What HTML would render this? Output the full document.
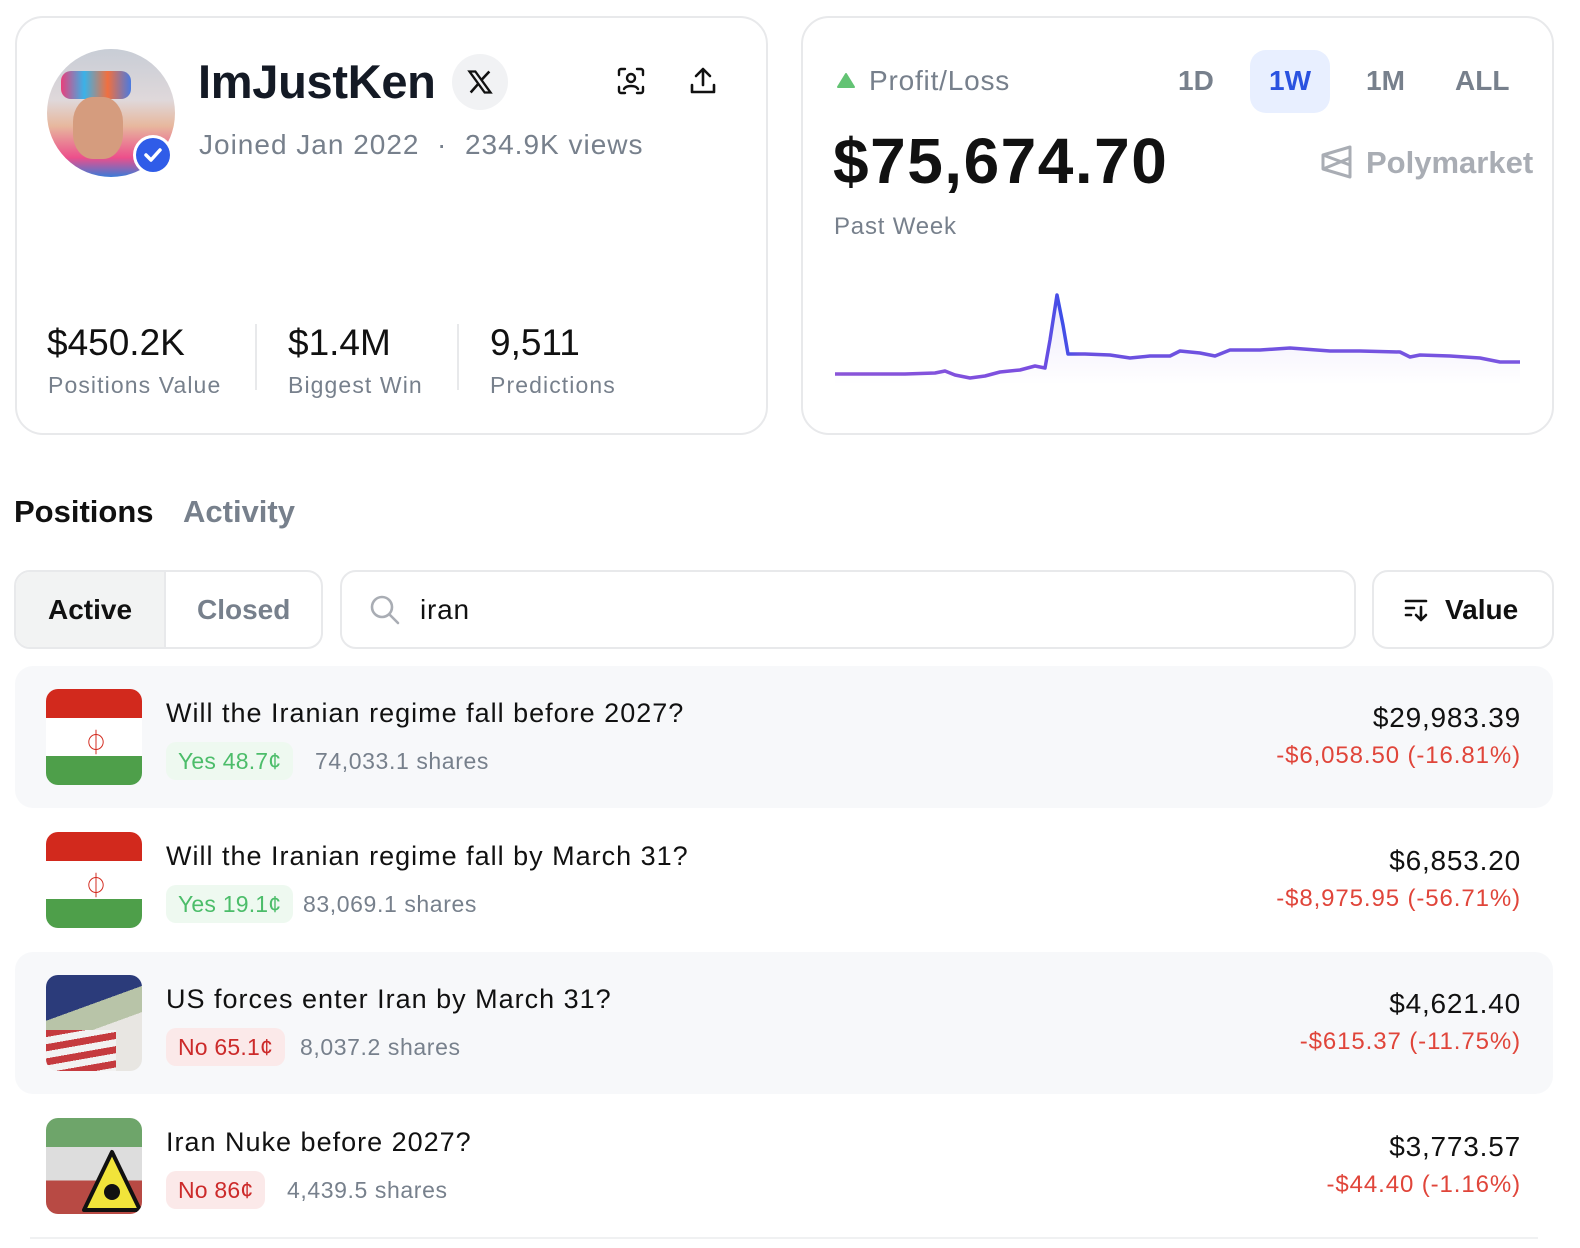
<!DOCTYPE html>
<html><head><meta charset="utf-8"><style>
*{margin:0;padding:0;box-sizing:border-box}
body{width:1580px;height:1248px;background:#fff;font-family:"Liberation Sans",sans-serif;color:#111;position:relative;overflow:hidden}
.a{position:absolute;white-space:nowrap}
.card{position:absolute;border:2px solid #e8e9eb;border-radius:28px;background:#fff}
.g{color:#77808c}
.row{position:absolute;left:15px;width:1538px;height:142px;border-radius:18px}
.flag{position:absolute;left:31px;top:23px;width:96px;height:96px;border-radius:12px;overflow:hidden}
.t{position:absolute;left:151px;top:32px;font-size:27px;color:#111;letter-spacing:1px}
.pill{position:absolute;left:151px;top:76px;height:38px;border-radius:10px;font-size:23px;line-height:38px;padding:0 12px;letter-spacing:0.2px}
.yes{background:#eef9f0;color:#4cbd6a}
.no{background:#fbe9e9;color:#cc2a2a}
.sh{position:absolute;top:82px;font-size:23px;color:#77808c;letter-spacing:0.6px}
.v{position:absolute;right:32px;top:36px;font-size:28px;color:#111;letter-spacing:0.8px}
.p{position:absolute;right:32px;top:76px;font-size:24px;color:#e0453a;letter-spacing:0.9px}
</style></head><body>

<div class="card" style="left:15px;top:16px;width:753px;height:419px"></div>
<div class="card" style="left:801px;top:16px;width:753px;height:419px"></div>

<div class="a" style="left:47px;top:49px;width:128px;height:128px;border-radius:50%;overflow:hidden;background:linear-gradient(180deg,#c8cdd6 0%,#dfd8da 40%,#e7b89e 60%,#ec4f8b 85%,#3a7bd8 100%)">
 <div style="position:absolute;left:14px;top:22px;width:70px;height:28px;border-radius:10px;background:linear-gradient(90deg,#e93f7b,#3ab2e8,#f07040,#4a7ae0)"></div>
 <div style="position:absolute;left:26px;top:48px;width:50px;height:62px;border-radius:40%;background:#d59c7e"></div>
</div>
<div class="a" style="left:133px;top:135px;width:40px;height:40px;border-radius:50%;background:#fff"></div>
<div class="a" style="left:136px;top:138px;width:34px;height:34px;border-radius:50%;background:#2f5ce8"></div>
<svg class="a" style="left:136px;top:138px" width="34" height="34"><path d="M10 17l5 5 9-10" stroke="#fff" stroke-width="3.5" fill="none" stroke-linecap="round" stroke-linejoin="round"/></svg>

<div class="a" style="left:198px;top:54px;font-size:47px;font-weight:bold;color:#141a25;letter-spacing:-0.3px">ImJustKen</div>
<div class="a" style="left:452px;top:54px;width:56px;height:56px;border-radius:50%;background:#f1f2f4"></div>
<svg class="a" style="left:466px;top:68px" width="28" height="28" viewBox="0 0 24 24"><path d="M3 3h5l13 18h-5z" fill="none" stroke="#111" stroke-width="2"/><path d="M4 21L11 13M13 10.5L20 3" stroke="#111" stroke-width="2.2"/></svg>
<svg class="a" style="left:616px;top:66px" width="30" height="30" viewBox="0 0 30 30" fill="none" stroke="#111" stroke-width="2.4" stroke-linecap="round"><path d="M3 9V5a2 2 0 0 1 2-2h4M21 3h4a2 2 0 0 1 2 2v4M27 21v4a2 2 0 0 1-2 2h-4M9 27H5a2 2 0 0 1-2-2v-4"/><circle cx="15" cy="12" r="4"/><path d="M8 23c2-4 12-4 14 0"/></svg>
<svg class="a" style="left:689px;top:66px" width="28" height="30" viewBox="0 0 28 30" fill="none" stroke="#111" stroke-width="2.6" stroke-linecap="round" stroke-linejoin="round"><path d="M14 19V3M7 10l7-7 7 7M3 19v7h22v-7"/></svg>

<div class="a g" style="left:199px;top:129px;font-size:28px;letter-spacing:1px">Joined Jan 2022 &nbsp;·&nbsp; 234.9K views</div>

<div class="a" style="left:47px;top:322px;font-size:37px;color:#111">$450.2K</div>
<div class="a g" style="left:48px;top:372px;font-size:23px;letter-spacing:1.1px">Positions Value</div>
<div class="a" style="left:255px;top:324px;width:2px;height:66px;background:#e8e9eb"></div>
<div class="a" style="left:288px;top:322px;font-size:37px;color:#111">$1.4M</div>
<div class="a g" style="left:288px;top:372px;font-size:23px;letter-spacing:1.1px">Biggest Win</div>
<div class="a" style="left:457px;top:324px;width:2px;height:66px;background:#e8e9eb"></div>
<div class="a" style="left:490px;top:322px;font-size:37px;color:#111">9,511</div>
<div class="a g" style="left:490px;top:372px;font-size:23px;letter-spacing:1.1px">Predictions</div>

<svg class="a" style="left:836px;top:72px" width="20" height="17"><path d="M10 2L18 15H2z" fill="#63c374" stroke="#63c374" stroke-width="2" stroke-linejoin="round"/></svg>
<div class="a g" style="left:869px;top:65px;font-size:28px;letter-spacing:0.8px">Profit/Loss</div>
<div class="a g" style="left:1178px;top:65px;font-size:28px;font-weight:bold">1D</div>
<div class="a" style="left:1250px;top:50px;width:80px;height:63px;border-radius:16px;background:#e8efff"></div>
<div class="a" style="left:1269px;top:65px;font-size:28px;font-weight:bold;color:#2a52e0">1W</div>
<div class="a g" style="left:1366px;top:65px;font-size:28px;font-weight:bold">1M</div>
<div class="a g" style="left:1455px;top:65px;font-size:28px;font-weight:bold">ALL</div>
<div class="a" style="left:833px;top:124px;font-size:64px;font-weight:bold;color:#111;letter-spacing:1.5px">$75,674.70</div>
<svg class="a" style="left:1321px;top:144px" width="32" height="36" viewBox="0 0 32 36" fill="none" stroke="#a9adb4" stroke-width="3" stroke-linejoin="round"><path d="M29 3L2 11v14l27 8zM2 11l27 10M2 25l27-11"/></svg>
<div class="a" style="left:1366px;top:145px;font-size:31px;font-weight:bold;color:#a9adb4">Polymarket</div>
<div class="a g" style="left:834px;top:213px;font-size:24px;letter-spacing:0.8px">Past Week</div>

<svg class="a" style="left:0;top:0" width="1580" height="440">
<defs>
<linearGradient id="lg" x1="0" y1="0" x2="1" y2="0"><stop offset="0" stop-color="#8a55d8"/><stop offset=".3" stop-color="#7a4ee0"/><stop offset=".33" stop-color="#3c4ee8"/><stop offset=".36" stop-color="#6a50e0"/><stop offset="1" stop-color="#7a55e0"/></linearGradient>
<linearGradient id="fg" x1="0" y1="0" x2="0" y2="1"><stop offset="0" stop-color="#7a55e0" stop-opacity=".14"/><stop offset="1" stop-color="#7a55e0" stop-opacity="0"/></linearGradient>
</defs>
<path d="M835 374L865 374L905 374L935 373L945 371L955 375L970 378L985 376L1000 372L1020 370L1035 366L1045 368L1050 340L1057 295L1063 325L1068 354L1085 354L1110 355L1130 358L1150 356L1170 356L1180 351L1200 353L1215 356L1230 350L1260 350L1290 348L1330 351L1360 351L1400 352L1410 357L1420 355L1450 356L1480 358L1500 362L1520 362L1520 385L835 385Z" fill="url(#fg)"/>
<path d="M835 374L865 374L905 374L935 373L945 371L955 375L970 378L985 376L1000 372L1020 370L1035 366L1045 368L1050 340L1057 295L1063 325L1068 354L1085 354L1110 355L1130 358L1150 356L1170 356L1180 351L1200 353L1215 356L1230 350L1260 350L1290 348L1330 351L1360 351L1400 352L1410 357L1420 355L1450 356L1480 358L1500 362L1520 362" fill="none" stroke="url(#lg)" stroke-width="3.5" stroke-linejoin="round"/>
</svg>

<div class="a" style="left:14px;top:494px;font-size:31px;font-weight:bold;color:#111">Positions</div>
<div class="a g" style="left:183px;top:494px;font-size:31px;font-weight:bold">Activity</div>

<div class="a" style="left:14px;top:570px;width:309px;height:79px;border:2px solid #e8e9eb;border-radius:16px;overflow:hidden">
 <div style="position:absolute;left:0;top:0;width:150px;height:100%;background:#f2f3f3;border-right:2px solid #e8e9eb"></div>
</div>
<div class="a" style="left:48px;top:594px;font-size:28px;font-weight:bold;color:#111">Active</div>
<div class="a g" style="left:197px;top:594px;font-size:28px;font-weight:bold">Closed</div>
<div class="a" style="left:340px;top:570px;width:1016px;height:79px;border:2px solid #e8e9eb;border-radius:16px"></div>
<svg class="a" style="left:368px;top:593px" width="34" height="34" viewBox="0 0 34 34" fill="none" stroke="#a9adb4" stroke-width="2.6" stroke-linecap="round"><circle cx="14" cy="14" r="10"/><path d="M22 22l8 8"/></svg>
<div class="a" style="left:420px;top:594px;font-size:28px;color:#111;letter-spacing:0.8px">iran</div>
<div class="a" style="left:1372px;top:570px;width:182px;height:79px;border:2px solid #e8e9eb;border-radius:16px"></div>
<svg class="a" style="left:1404px;top:598px" width="26" height="24" viewBox="0 0 26 24" fill="none" stroke="#111" stroke-width="2.6" stroke-linecap="round" stroke-linejoin="round"><path d="M2 3h20M2 10h8M2 17h5M17 9v13M12 17l5 5 5-5"/></svg>
<div class="a" style="left:1445px;top:594px;font-size:28px;font-weight:bold;color:#111">Value</div>

<div class="row" style="top:666px;background:#f7f8fa">
 <div class="flag" style="background:linear-gradient(#d2291d 0 30%,#fff 30% 70%,#4e9f4a 70%)"><div style="position:absolute;left:38px;top:34px;font-size:24px;color:#d2291d">⏀</div></div>
 <div class="t">Will the Iranian regime fall before 2027?</div>
 <div class="pill yes">Yes 48.7¢</div><div class="sh" style="left:300px">74,033.1 shares</div>
 <div class="v">$29,983.39</div><div class="p">-$6,058.50 (-16.81%)</div>
</div>
<div class="row" style="top:809px">
 <div class="flag" style="background:linear-gradient(#d2291d 0 30%,#fff 30% 70%,#4e9f4a 70%)"><div style="position:absolute;left:38px;top:34px;font-size:24px;color:#d2291d">⏀</div></div>
 <div class="t">Will the Iranian regime fall by March 31?</div>
 <div class="pill yes">Yes 19.1¢</div><div class="sh" style="left:288px">83,069.1 shares</div>
 <div class="v">$6,853.20</div><div class="p">-$8,975.95 (-56.71%)</div>
</div>
<div class="row" style="top:952px;background:#f7f8fa">
 <div class="flag" style="background:linear-gradient(160deg,#2b3b7a 0 35%,#b8c4a8 35% 55%,#e8e6e2 55%)"><div style="position:absolute;left:0;top:55px;width:70px;height:41px;background:repeating-linear-gradient(170deg,#c53a3e 0 7px,#f2f2f2 7px 14px)"></div></div>
 <div class="t">US forces enter Iran by March 31?</div>
 <div class="pill no">No 65.1¢</div><div class="sh" style="left:285px">8,037.2 shares</div>
 <div class="v">$4,621.40</div><div class="p">-$615.37 (-11.75%)</div>
</div>
<div class="row" style="top:1095px">
 <div class="flag" style="background:linear-gradient(#6ea56a 0 30%,#ddd 30% 65%,#b84a44 65%)"><svg style="position:absolute;left:36px;top:30px" width="60" height="66"><path d="M30 4L58 62H2z" fill="#f1e43a" stroke="#111" stroke-width="4" stroke-linejoin="round"/><circle cx="30" cy="44" r="8" fill="#111"/></svg></div>
 <div class="t">Iran Nuke before 2027?</div>
 <div class="pill no">No 86¢</div><div class="sh" style="left:272px">4,439.5 shares</div>
 <div class="v">$3,773.57</div><div class="p">-$44.40 (-1.16%)</div>
</div>
<div class="a" style="left:30px;top:1237px;width:1508px;height:2px;background:#f0f1f2"></div>
</body></html>
